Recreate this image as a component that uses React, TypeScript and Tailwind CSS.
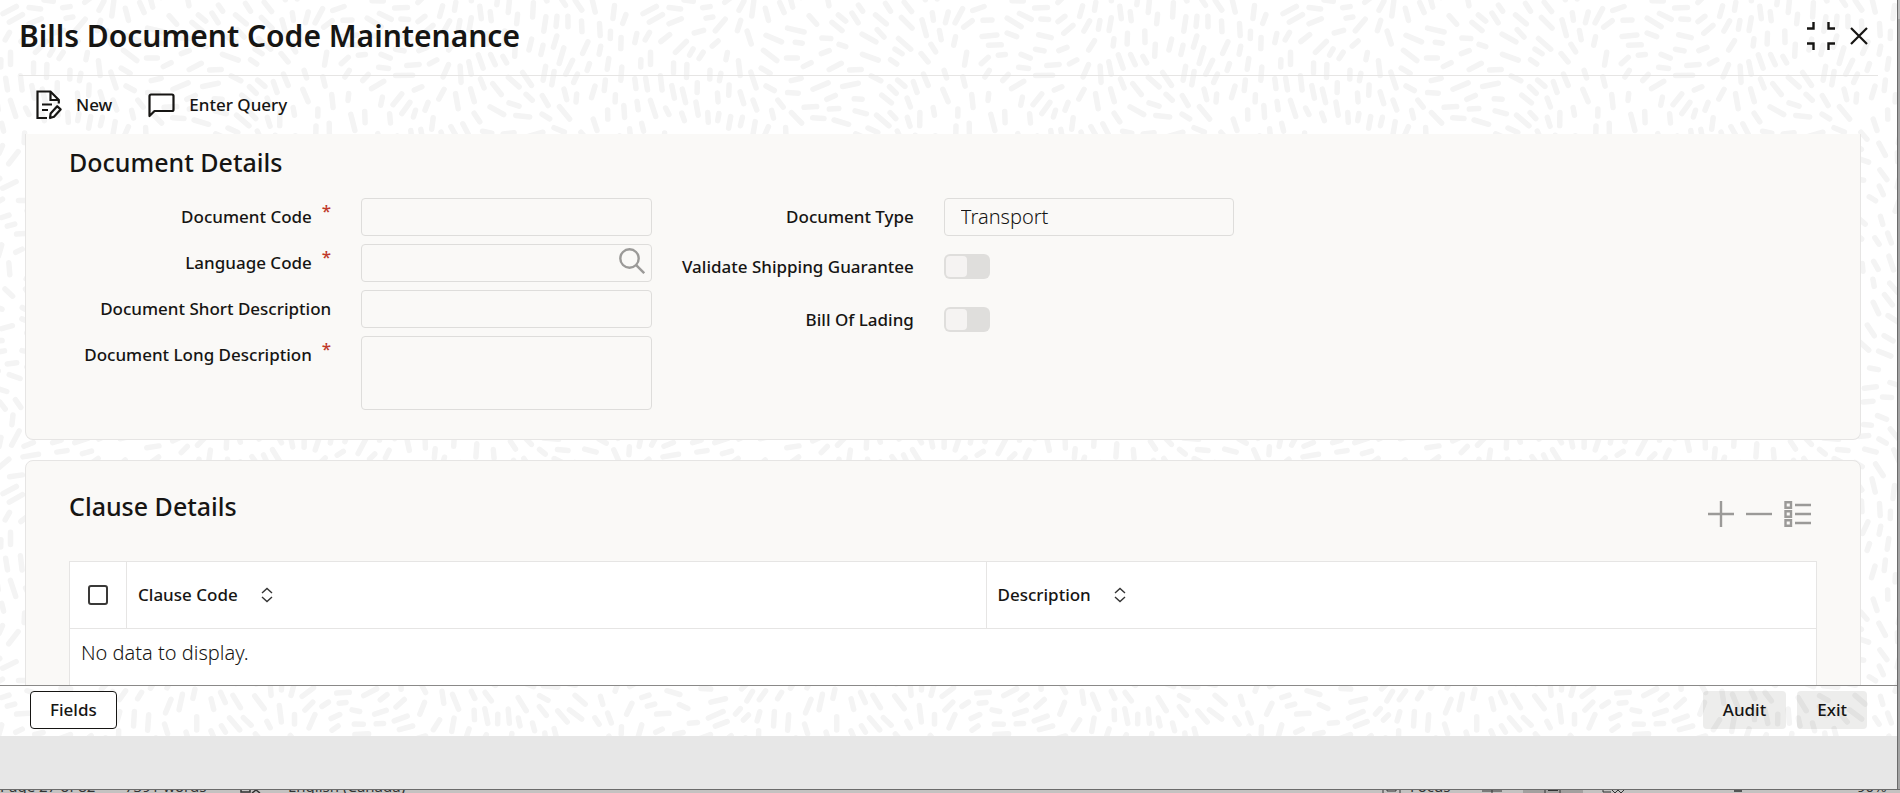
import type { ReactNode } from 'react';

const TILE_W = 640;
const TILE_H = 480;

// Dashes that follow a smooth, tileable flow field
function buildDashes() {
  let seed = 7;
  const rand = () => {
    seed = (seed * 16807) % 2147483647;
    return seed / 2147483647;
  };
  const tau = Math.PI * 2;
  const angle = (x: number, y: number) => {
    const u = (x / TILE_W) * tau;
    const v = (y / TILE_H) * tau;
    return (
      1.5 +
      0.9 * Math.sin(2 * u + Math.sin(v)) +
      0.8 * Math.cos(2 * v + 1.5 * Math.sin(u)) +
      0.4 * Math.sin(4 * u - 2 * v)
    );
  };
  const wrap = (d: number, size: number) => {
    const a = Math.abs(d) % size;
    return Math.min(a, size - a);
  };
  const placed: number[][][] = [];
  let d = '';
  for (let i = 0; i < 24000; i++) {
    const x = rand() * TILE_W;
    const y = rand() * TILE_H;
    const a = angle(x, y) + (rand() - 0.5) * 0.4;
    const half = 3.5 + rand() * 5;
    const dx = Math.cos(a) * half;
    const dy = Math.sin(a) * half;
    const pts = [[x - dx, y - dy], [x, y], [x + dx, y + dy]];
    const clash = placed.some(p =>
      wrap(p[1][0] - x, TILE_W) < 28 &&
      wrap(p[1][1] - y, TILE_H) < 28 &&
      p.some(q => pts.some(r => Math.hypot(wrap(q[0] - r[0], TILE_W), wrap(q[1] - r[1], TILE_H)) < 9.5))
    );
    if (clash) continue;
    placed.push(pts);
    for (const ox of [-TILE_W, 0, TILE_W]) {
      for (const oy of [-TILE_H, 0, TILE_H]) {
        const cx = x + ox;
        const cy = y + oy;
        if (cx < -12 || cx > TILE_W + 12 || cy < -12 || cy > TILE_H + 12) continue;
        d += `M${(cx - dx).toFixed(1)} ${(cy - dy).toFixed(1)}L${(cx + dx).toFixed(1)} ${(cy + dy).toFixed(1)}`;
      }
    }
  }
  return d;
}

const DASHES = buildDashes();

const BOX = 'border border-[#dedddb] rounded bg-[#faf9f7] text-[20px] font-light';

function Backdrop() {
  return (
    <svg className="absolute inset-0 w-full h-full -z-10" aria-hidden="true">
      <pattern id="dashes" width={TILE_W} height={TILE_H} patternUnits="userSpaceOnUse">
        <path d={DASHES} stroke="#f4f4f4" strokeWidth="5.5" strokeLinecap="round" />
      </pattern>
      <rect width="100%" height="100%" fill="url(#dashes)" />
    </svg>
  );
}

function Field({ id, label, required, tall, children }: {
  id: string; label: string; required?: boolean; tall?: boolean; children: ReactNode;
}) {
  return (
    <div className={tall ? 'flex items-center h-[45px]' : 'flex items-start'}>
      <label htmlFor={id} className="w-[45%] shrink-0 mr-[30px] flex justify-end text-[17px] leading-[38px] font-medium whitespace-nowrap">
        {label}
        {required && <span className="ml-2.5 leading-[26px] text-[#c0392b]">*</span>}
      </label>
      {children}
    </div>
  );
}

function Toggle({ id }: { id: string }) {
  return (
    <input id={id} type="checkbox" role="switch" disabled
      className="appearance-none w-[46px] h-[25px] p-0.5 rounded-md bg-[#dfdedc] before:block before:w-[21px] before:h-[21px] before:rounded before:bg-[#f5f3f2]" />
  );
}

function SortHeader({ title }: { title: string }) {
  return (
    <th scope="col" className="border-r border-[#e6e5e4] px-[11px] text-left font-medium last:border-r-0">
      <div className="flex items-center gap-[23px]">
        {title}
        <button aria-label={`Sort by ${title}`}>
          <svg width="12" height="16" viewBox="0 0 12 16" fill="none" stroke="#333" strokeWidth="1.4">
            <path d="M1 6 6 1.5 11 6M1 10l5 4.5L11 10" />
          </svg>
        </button>
      </div>
    </th>
  );
}

// Top edge of the word processor's status bar that shows under the window
function StatusBar() {
  return (
    <div className="flex items-end h-[3px] overflow-hidden bg-[#c4c2c1] text-[15px] leading-[14px] text-[#333] whitespace-nowrap">
      <span className="w-[125px]">Page 27 of 82</span>
      <span className="w-[115px]">7391 words</span>
      <svg className="w-12 h-[3px]" viewBox="0 0 48 3" fill="none" stroke="#333" strokeWidth="1.5">
        <path d="M1 0v2h9V0M12 3l4-3 4 3" />
      </svg>
      <span>English (Canada)</span>
      <svg className="ml-auto w-7 h-[3px]" viewBox="0 0 28 3" fill="none" stroke="#333">
        <path d="M1 0v3M18 0v3M5 0v1h9V0" />
      </svg>
      <span className="w-[72px]">Focus</span>
      <svg className="w-[375px] h-[3px]" viewBox="0 0 375 3" fill="none" stroke="#333">
        <path d="M0 1h20M10 0v3" />
        <path d="M41 0h60v3H41z" fill="#a3a09f" stroke="none" />
        <path d="M63 0v3M78 0v3M66 .5h10M121 0v2h8M130 0l3 3 3-3 3 3 3-3" />
        <path d="M252 0h8v2h-8z" fill="#555" stroke="none" />
      </svg>
      <span className="w-[43px]">90%</span>
    </div>
  );
}

export default function App() {
  return (
    <div className="h-screen flex flex-col overflow-hidden bg-white text-[#161513] font-['Noto_Sans',sans-serif]">
      <div className="flex-1 min-h-0 flex">
        <div className="flex-1 min-w-0 flex flex-col">
          <div className="relative z-0 flex-1 min-h-0 flex flex-col">
            <Backdrop />
            <header className="mx-[19px] h-[76px] shrink-0 flex items-center justify-between border-b border-[#e6e5e4] pr-2.5 pb-1">
              <h1 className="text-[30px] font-semibold">Bills Document Code Maintenance</h1>
              <div className="flex items-center gap-[15px]">
                <button aria-label="Restore size">
                  <svg width="28" height="28" viewBox="0 0 28 28" fill="none" stroke="#161513" strokeWidth="2.4">
                    <path d="M0 6.5h6.5V0M28 6.5h-6.5V0M0 21.5h6.5V28M28 21.5h-6.5V28" />
                  </svg>
                </button>
                <button aria-label="Close">
                  <svg width="18" height="18" viewBox="0 0 18 18" fill="none" stroke="#161513" strokeWidth="2.2">
                    <path d="m1 1 16 16M17 1 1 17" />
                  </svg>
                </button>
              </div>
            </header>

            <nav className="h-[58px] shrink-0 flex items-center gap-9 px-9 text-[17px] font-medium">
              <button className="flex items-center gap-3.5">
                <svg width="26" height="30" viewBox="0 0 26 30" fill="none" stroke="#161513" strokeWidth="2.2">
                  <path d="M11 28H1.5V1.5h13L22.8 10v3.5M14.5 1.5V10h8.3M6 14.5h10M6 20h6" />
                  <path d="m14 28 .6-4.4 6.6-7.4 3.4 3.2-6.6 7.4z" strokeLinejoin="round" />
                </svg>
                New
              </button>
              <button className="flex items-center gap-3.5">
                <svg width="27" height="25" viewBox="0 0 27 25" fill="none" stroke="#161513" strokeWidth="2.2" strokeLinejoin="round">
                  <path d="M1.5 23V3A1.5 1.5 0 0 1 3 1.5h21A1.5 1.5 0 0 1 25.5 3v13.5A1.5 1.5 0 0 1 24 18H6.5z" />
                </svg>
                Enter Query
              </button>
            </nav>

            <main className="flex-1 min-h-0 overflow-hidden flex flex-col gap-5 pl-[25px] pr-9">
              <section className="shrink-0 border border-t-0 border-[#e6e5e4] rounded-b-lg bg-[#faf9f7] px-[43px] pt-2.5 pb-[29px]">
                <h2 className="text-[25px] leading-9 font-medium mb-[18px]">Document Details</h2>
                <div className="grid grid-cols-3">
                  <div className="flex flex-col gap-2">
                    <Field id="code" label="Document Code" required>
                      <input id="code" disabled className={`${BOX} flex-1 min-w-0 h-[38px] px-4`} />
                    </Field>
                    <Field id="lang" label="Language Code" required>
                      <div className={`${BOX} flex-1 min-w-0 h-[38px] flex items-center pr-1.5`}>
                        <input id="lang" disabled className="flex-1 min-w-0 h-full px-4" />
                        <button aria-label="Find language code" disabled className="pb-1">
                          <svg width="26" height="26" viewBox="0 0 26 26" fill="none" stroke="#9b9a98" strokeWidth="2.4">
                            <circle cx="10.5" cy="10.5" r="9.2" />
                            <path d="m17.2 17.2 8 8" />
                          </svg>
                        </button>
                      </div>
                    </Field>
                    <Field id="short" label="Document Short Description">
                      <input id="short" disabled className={`${BOX} flex-1 min-w-0 h-[38px] px-4`} />
                    </Field>
                    <Field id="long" label="Document Long Description" required>
                      <textarea id="long" disabled className={`${BOX} flex-1 min-w-0 h-[74px] px-4 resize-none`} />
                    </Field>
                  </div>
                  <div className="flex flex-col gap-2">
                    <Field id="type" label="Document Type">
                      <select id="type" disabled className={`${BOX} flex-1 min-w-0 h-[38px] px-4 appearance-none opacity-100`}>
                        <option>Transport</option>
                      </select>
                    </Field>
                    <Field id="guarantee" label="Validate Shipping Guarantee" tall>
                      <Toggle id="guarantee" />
                    </Field>
                    <Field id="lading" label="Bill Of Lading" tall>
                      <Toggle id="lading" />
                    </Field>
                  </div>
                </div>
              </section>

              <section className="shrink-0 border border-[#e6e5e4] rounded-lg bg-[#faf9f7] px-[43px] pt-[27px] pb-10">
                <div className="flex items-start justify-between h-[73px]">
                  <h2 className="text-[25px] leading-9 font-medium">Clause Details</h2>
                  <div className="flex gap-3 pt-[13px] pr-1.5 text-[#9b9a98]">
                    <button aria-label="Add row" disabled>
                      <svg width="26" height="26" viewBox="0 0 26 26" stroke="currentColor" strokeWidth="2.4">
                        <path d="M0 13h26M13 0v26" />
                      </svg>
                    </button>
                    <button aria-label="Delete row" disabled>
                      <svg width="26" height="26" viewBox="0 0 26 26" stroke="currentColor" strokeWidth="2.4">
                        <path d="M0 13h26" />
                      </svg>
                    </button>
                    <button aria-label="Single view" disabled>
                      <svg width="27" height="26" viewBox="0 0 27 26" fill="none" stroke="currentColor" strokeWidth="2.4">
                        <path d="M1.5 1.2H7v5.500H1.500zM1.500 10.200H7v5.500H1.500zM1.500 19.200H7v5.500H1.500zM11 4h16M11 13h16M11 22h16" />
                      </svg>
                    </button>
                  </div>
                </div>
                <table className="w-full table-fixed border-collapse border border-[#e6e5e4] bg-white">
                  <colgroup>
                    <col className="w-[57px]" />
                    <col className="w-[49.2%]" />
                    <col />
                  </colgroup>
                  <thead>
                    <tr className="h-[67px] border-b border-[#e6e5e4] text-[17px]">
                      <th scope="col" className="border-r border-[#e6e5e4]">
                        <input type="checkbox" aria-label="Select all rows"
                          className="appearance-none block mx-auto w-5 h-5 border-2 border-[#3a3938] rounded-[3px] bg-white" />
                      </th>
                      <SortHeader title="Clause Code" />
                      <SortHeader title="Description" />
                    </tr>
                  </thead>
                  <tbody>
                    <tr>
                      <td colSpan={3} className="h-[200px] px-[11px] py-1.5 align-top text-[20px] leading-9 font-light">
                        No data to display.
                      </td>
                    </tr>
                  </tbody>
                </table>
              </section>
            </main>

            <footer className="shrink-0 h-[51px] flex items-start border-t border-[#8a8988] pt-[5px] px-[30px] text-[17px] font-medium">
              <button className="h-[38px] px-[19px] border border-[#161513] rounded bg-white">Fields</button>
              <button className="ml-auto h-[38px] px-5 rounded bg-[#161513]/8">Audit</button>
              <button className="ml-[11px] h-[38px] px-5 rounded bg-[#161513]/8">Exit</button>
            </footer>
          </div>
          <div className="shrink-0 h-[53px] bg-[#e7e7e7]" />
        </div>
        <div className="w-[3px] shrink-0 flex flex-col border-l border-[#6b6b6b]">
          <div className="h-[19px] bg-[#bdbdbd]" />
          <div className="flex-1 bg-[#a3a3a3]" />
        </div>
      </div>
      <div className="h-px shrink-0 bg-[#6b6b6b]" />
      <StatusBar />
    </div>
  );
}
